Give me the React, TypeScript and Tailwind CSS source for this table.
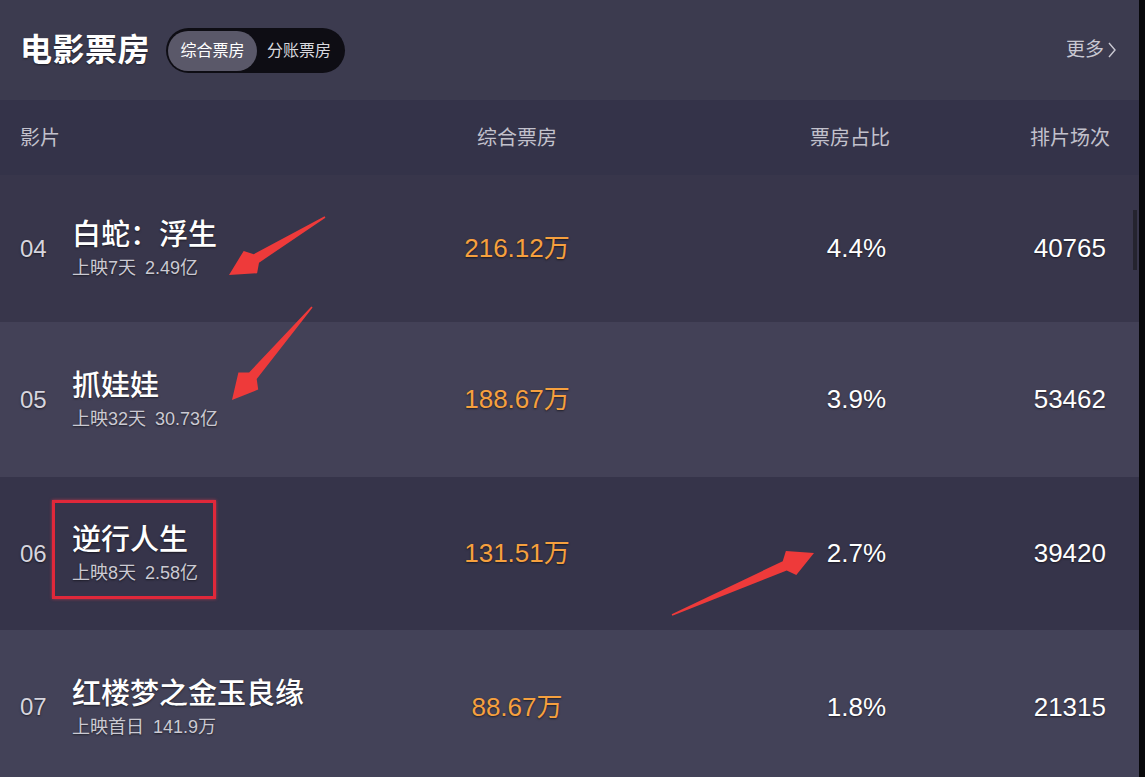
import React from "react";

const FONT = { fontFamily: '"Liberation Sans", "Noto Sans CJK SC", sans-serif' };

type Row = {
  no: string;
  title: string;
  days: string;
  total: string;
  box: string;
  pct: string;
  count: string;
  bg: string;
  h: string;
};

const rows: Row[] = [
  { no: "04", title: "白蛇：浮生", days: "上映7天", total: "2.49亿", box: "216.12万", pct: "4.4%", count: "40765", bg: "bg-[#38364b]", h: "h-[147px]" },
  { no: "05", title: "抓娃娃", days: "上映32天", total: "30.73亿", box: "188.67万", pct: "3.9%", count: "53462", bg: "bg-[#434157]", h: "h-[155px]" },
  { no: "06", title: "逆行人生", days: "上映8天", total: "2.58亿", box: "131.51万", pct: "2.7%", count: "39420", bg: "bg-[#36344a]", h: "h-[153px]" },
  { no: "07", title: "红楼梦之金玉良缘", days: "上映首日", total: "141.9万", box: "88.67万", pct: "1.8%", count: "21315", bg: "bg-[#434258]", h: "h-[154px]" },
];

function arrowPoints(tx: number, ty: number, hx: number, hy: number) {
  const dx = hx - tx;
  const dy = hy - ty;
  const len = Math.sqrt(dx * dx + dy * dy);
  const ux = dx / len;
  const uy = dy / len;
  const px = -uy;
  const py = ux;
  const headLen = 32;
  const headHalf = 13;
  const neckHalf = 5;
  const tailHalf = 0.8;
  const nx = hx - ux * headLen;
  const ny = hy - uy * headLen;
  const bx = hx - ux * (headLen - 7);
  const by = hy - uy * (headLen - 7);
  const pts = [
    [tx + px * tailHalf, ty + py * tailHalf],
    [nx + px * neckHalf, ny + py * neckHalf],
    [bx + px * headHalf, by + py * headHalf],
    [hx, hy],
    [bx - px * headHalf, by - py * headHalf],
    [nx - px * neckHalf, ny - py * neckHalf],
    [tx - px * tailHalf, ty - py * tailHalf],
  ];
  return pts.map((p) => `${p[0].toFixed(1)},${p[1].toFixed(1)}`).join(" ");
}

export default function App() {
  const shadow = "[text-shadow:0_1px_2px_rgba(0,0,0,0.55)]";
  return (
    <div className="relative w-[1145px] h-[777px] overflow-hidden bg-[#38364b]" style={FONT}>
      <div className="flex flex-col w-full pr-[6px]">
        {/* header */}
        <div className="h-[100px] bg-[#3c3b4f] flex items-center pl-[20px] pr-[22px] shrink-0">
          <div className={`text-white text-[32px] font-bold leading-none tracking-[0.5px] ${shadow}`}>电影票房</div>
          <div className="ml-[16px] h-[45px] rounded-full bg-[#0e0d14] flex items-center px-[2px] mt-[1px]">
            <div className="h-[40px] w-[89px] rounded-full bg-[#5a5869] flex items-center justify-center text-white text-[16px]">
              综合票房
            </div>
            <div className="h-[40px] px-[10px] flex items-center justify-center text-[#d8d8de] text-[16px] pr-[12px]">
              分账票房
            </div>
          </div>
          <div className="ml-auto flex items-center text-[#c9c8d2] text-[19px] gap-[3px]">
            <span>更多</span>
            <svg width="10" height="18" viewBox="0 0 10 18" fill="none">
              <path d="M2 2 L8 9 L2 16" stroke="#c9c8d2" strokeWidth="1.4" />
            </svg>
          </div>
        </div>
        {/* column header */}
        <div className="h-[75px] bg-[#343349] flex items-center pl-[20px] text-[#c2c1cc] text-[20px] shrink-0">
          <div className="w-[380px]">影片</div>
          <div className="w-[234px] text-center">综合票房</div>
          <div className="w-[256px] text-right">票房占比</div>
          <div className="w-[220px] text-right">排片场次</div>
        </div>
        {rows.map((r) => (
          <div key={r.no} className={`${r.h} ${r.bg} flex items-center pl-[20px] shrink-0`}>
            <div className="w-[380px] flex items-center">
              <div className={`w-[52px] text-[24px] text-[#d6d5de] ${shadow}`}>{r.no}</div>
              <div className="flex flex-col">
                <div className={`text-[29px] leading-[36px] font-medium text-white ${shadow}`}>{r.title}</div>
                <div className={`mt-[3px] text-[18px] leading-[24px] text-[#cbcad3] flex gap-[9px] ${shadow}`}>
                  <span>{r.days}</span>
                  <span>{r.total}</span>
                </div>
              </div>
            </div>
            <div className={`w-[234px] text-center text-[26px] text-[#f6a03e] ${shadow}`}>{r.box}</div>
            <div className={`w-[252px] text-right text-[26px] text-white ${shadow}`}>{r.pct}</div>
            <div className={`w-[220px] text-right text-[26px] text-white ${shadow}`}>{r.count}</div>
          </div>
        ))}
      </div>

      {/* right edge: scrollbar + black border */}
      <div className="absolute top-[210px] right-[8px] w-[4px] h-[60px] bg-[#25242f]" />
      <div className="absolute top-0 right-0 w-[6px] h-full bg-[#08080b]" />

      {/* red highlight box */}
      <div className="absolute left-[52px] top-[500px] w-[164px] h-[99px] border-[3px] border-[#e0283a] shadow-[0_0_3px_rgba(255,60,80,0.6)]" />

      {/* arrows */}
      <svg className="absolute inset-0 pointer-events-none" width="1145" height="777" viewBox="0 0 1145 777">
        <polygon points={arrowPoints(325, 217, 229, 275)} fill="#ee3a3a" />
        <polygon points={arrowPoints(312, 307, 232, 400)} fill="#ee3a3a" />
        <polygon points={arrowPoints(672, 615, 814, 553)} fill="#ee3a3a" />
      </svg>
    </div>
  );
}
